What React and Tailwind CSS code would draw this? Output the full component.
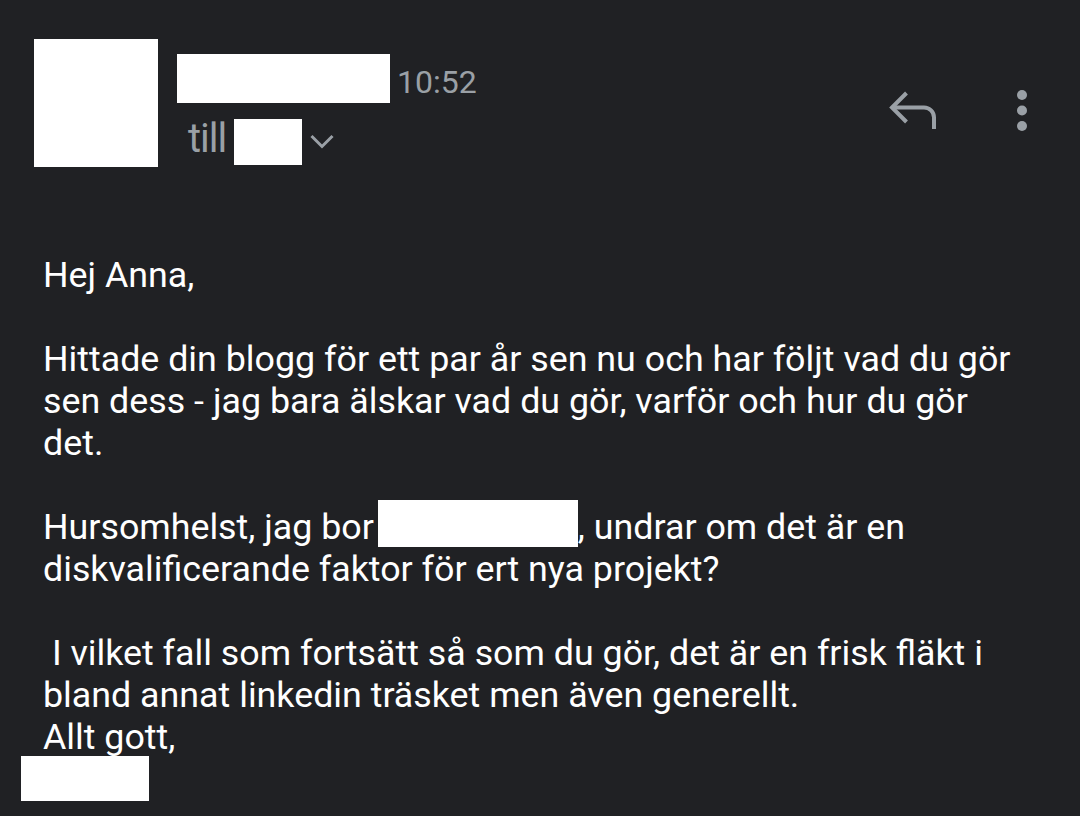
export default function App() {
  return (
    <div className="w-[1080px] h-[816px] overflow-hidden bg-[#202124] font-['Roboto',sans-serif]">
      {/* Header */}
      <div className="flex items-start pt-[39px] pl-[34px]">
        <div className="w-[124px] h-[128px] bg-white" />
        <div className="ml-[19px] flex flex-col">
          <div className="flex items-start mt-[15px]">
            <div className="w-[213px] h-[49px] bg-white" />
            <span className="ml-[7px] mt-[10px] text-[32px] leading-[36px] text-[#9aa0a6]">10:52</span>
          </div>
          <div className="flex items-start mt-[16px]">
            <span className="ml-[11px] text-[40px] leading-[40px] tracking-[-1px] text-[#9aa0a6]">till</span>
            <div className="ml-[8px] w-[68px] h-[46px] bg-white" />
            <svg className="ml-[8px] mt-[15px]" width="24" height="16" viewBox="0 0 24 16" fill="none">
              <path d="M1.5 2l10.5 10.5L22.5 2" stroke="#9aa0a6" strokeWidth="3" />
            </svg>
          </div>
        </div>
        <div className="ml-auto flex items-start mt-[49px] mr-[52px]">
          <svg width="54" height="44" viewBox="0 0 54 44" fill="none">
            <path d="M20.5 5L6 19.5 20.5 34" stroke="#9aa0a6" strokeWidth="4" />
            <path d="M6 19.5h32a10 10 0 0 1 10 10V41" stroke="#9aa0a6" strokeWidth="4" />
          </svg>
          <svg className="ml-[76px] mt-[1px]" width="12" height="44" viewBox="0 0 12 44">
            <circle cx="6" cy="6" r="5" fill="#9aa0a6" />
            <circle cx="6" cy="21.5" r="5" fill="#9aa0a6" />
            <circle cx="6" cy="37" r="5" fill="#9aa0a6" />
          </svg>
        </div>
      </div>

      {/* Body */}
      <div className="mt-[87px] pl-[43px] pr-[60px] text-[35.8px] leading-[42px] text-white">
        <div>Hej Anna,</div>
        <div className="mt-[42px]">
          Hittade din blogg för ett par år sen nu och har följt vad du gör sen dess - jag bara älskar vad du gör, varför och hur du gör det.
        </div>
        <div className="mt-[42px]">
          Hursomhelst, jag bor
          <span className="inline-block ml-[4px] w-[200px] h-[47px] -mt-[8px] align-[-8px] bg-white" />
          , undrar om det är en diskvalificerande faktor för ert nya projekt?
        </div>
        <div className="mt-[42px]">
          {'\u00a0'}I vilket fall som fortsätt så som du gör, det är en frisk fläkt i bland annat linkedin träsket men även generellt.
        </div>
        <div>Allt gott,</div>
        <div className="relative -ml-[22px] -mt-[2px] w-[128px] h-[45px] bg-white" />
      </div>
    </div>
  )
}
